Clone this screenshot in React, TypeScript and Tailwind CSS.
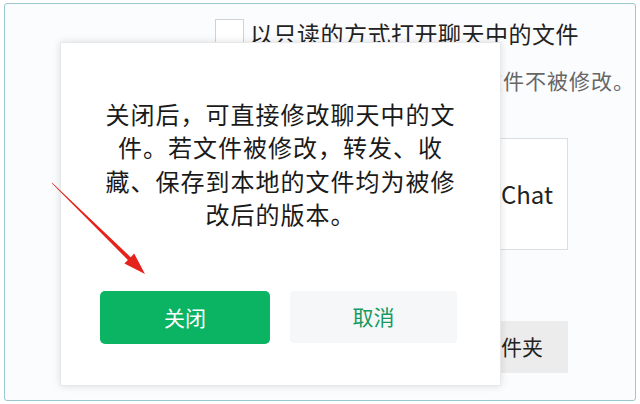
const font = { fontFamily: '"Noto Sans CJK SC", "Noto Sans", sans-serif' };

export default function App() {
  return (
    <div className="relative w-[640px] h-[404px] bg-white pt-[3px] pl-[4px]" style={font}>
      <div className="relative w-[632px] h-[398px] rounded-[3px] border border-[#9cc8cf] bg-[#fbfcfd] overflow-hidden">
        {/* background settings page */}
        <div className="flex flex-col pl-[210px] pt-[15px]">
          <div className="flex items-center gap-[6px]">
            <div className="w-[29px] h-[28px] border border-[#cfd3d6] bg-white" />
            <span className="text-[23px] leading-[28px] text-[#222] tracking-[0.5px]">以只读的方式打开聊天中的文件</span>
          </div>
          <div className="w-[420px] mt-[18px] text-right text-[21px] leading-[30px] text-[#666] tracking-[1px]">
            勾选后，聊天中的文件不被修改。
          </div>
          <div className="mt-[43px] ml-[205px] w-[148px] h-[112px] border border-[#dcdfe2] bg-white flex items-center justify-end pr-[14px]">
            <span className="text-[24px] text-[#222]">WeChat</span>
          </div>
          <div className="mt-[71px] ml-[205px] w-[148px] h-[52px] bg-[#ececec] flex items-center justify-end pr-[25px]">
            <span className="text-[21px] text-[#222]">打开文件夹</span>
          </div>
        </div>

        {/* dialog */}
        <div className="absolute left-[55px] top-[38px] w-[441px] h-[344px] bg-white shadow-[0_0_8px_rgba(0,0,0,0.12)] border border-[#e6e8ea] flex flex-col">
          <div className="pt-[54px] px-[30px] text-center text-[24px] leading-[33.3px] tracking-[1px] text-[#1a1a1a]">
            关闭后，可直接修改聊天中的文
            <br />
            件。若文件被修改，转发、收
            <br />
            藏、保存到本地的文件均为被修
            <br />
            改后的版本。
          </div>
          <div className="mt-auto mb-[41px] flex gap-[20px] pl-[39px]">
            <button className="w-[170px] h-[53px] rounded-[5px] bg-[#0bb463] text-white text-[21px]">关闭</button>
            <button className="w-[167px] h-[52px] rounded-[4px] bg-[#f6f7f8] text-[#159a62] text-[21px]">取消</button>
          </div>
        </div>
      </div>

      {/* red arrow annotation */}
      <svg className="absolute left-0 top-0" width="640" height="404" viewBox="0 0 640 404">
        <polygon
          points="52.2,182.8 130.7,257.2 134.2,253.6 145,274 124.4,263.6 127.9,260 51.8,183.2"
          fill="#e5221c"
        />
      </svg>
    </div>
  );
}
